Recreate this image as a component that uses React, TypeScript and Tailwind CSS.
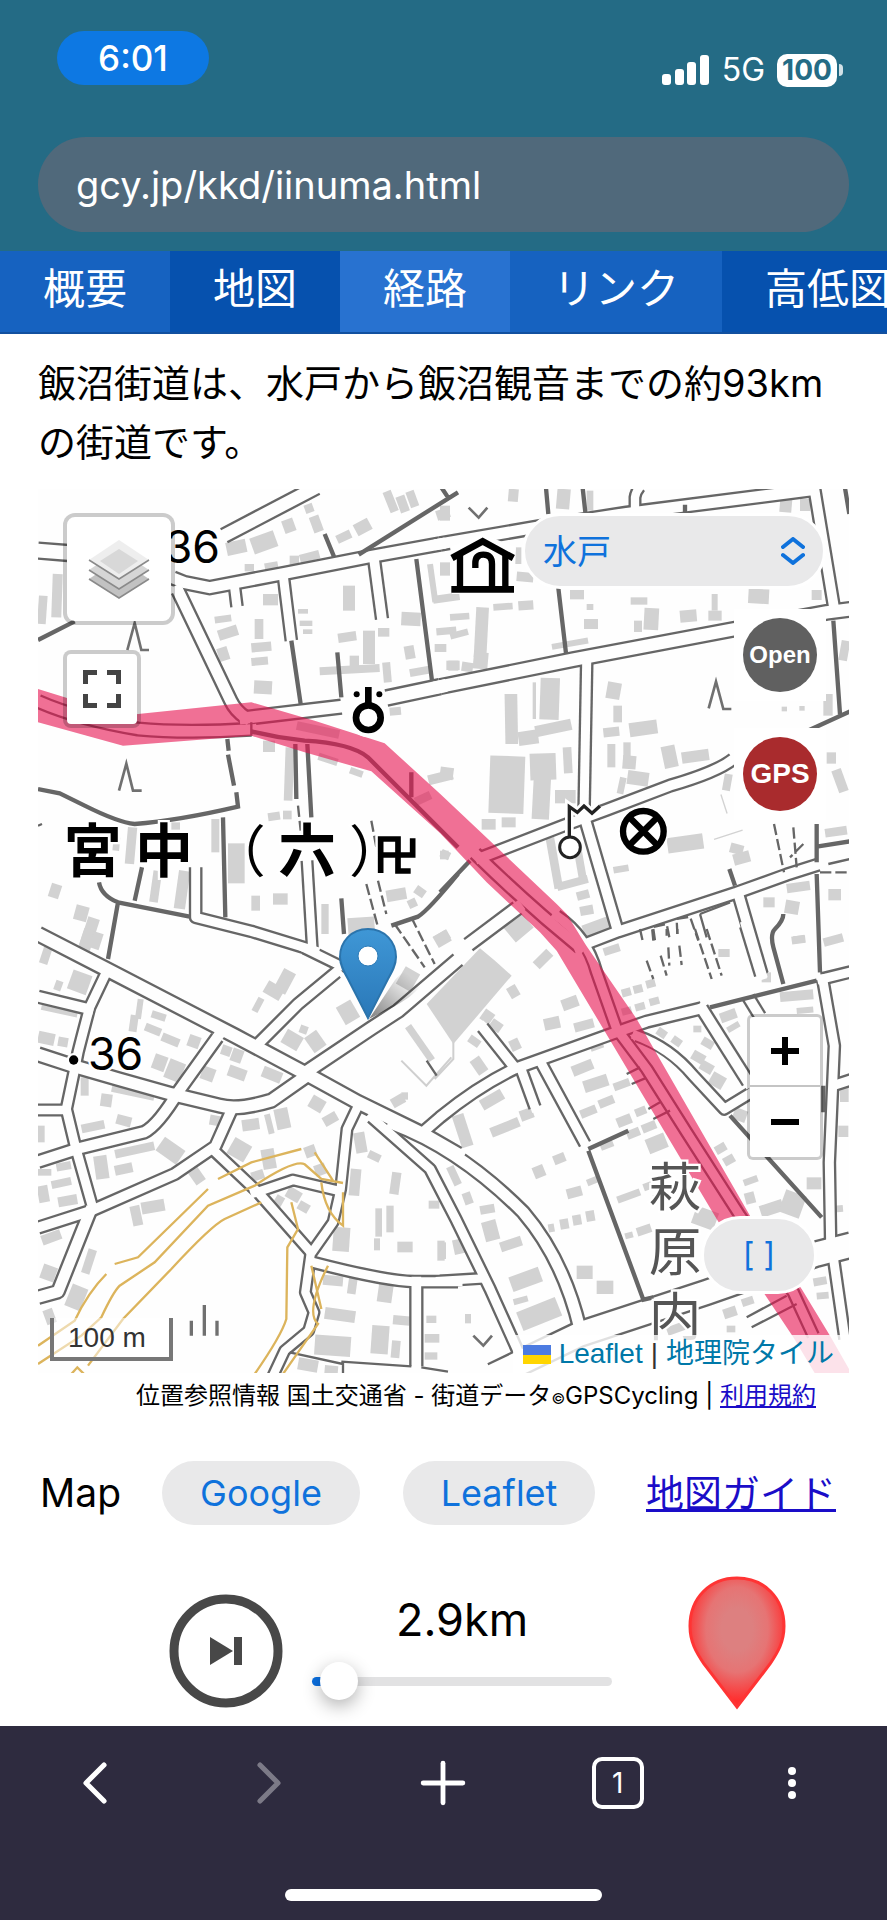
import { ChevronLeft, ChevronRight, Plus } from 'lucide-react'

type Road = [d: string, width: number]
type Building = [x: number, y: number, w: number, h: number, angle: number]

interface Tile {
  id: string
  x: number
  y: number
  roads: Road[]
  thin: string
  dashed: string
  thick: string
  contours: string
  buildings: Building[]
}

const tiles: Tile[] = [
  {
    id: 'nw',
    x: 0,
    y: -15,
    roads: [
      ['M558 155L835 10', 46],
      ['M0 200L90 207', 50],
      ['M405 282L440 296L515 311L740 268L1000 217L1206 180', 42],
      ['M420 320L578 650Q592 680 622 700', 42],
      ['M590 312L597 368', 36],
      ['M737 285L760 470', 36],
      ['M1008 225L1032 405', 38],
      ['M622 702L910 668', 44],
      ['M1045 642L1206 608', 48],
      ['M0 652Q120 705 300 735Q440 748 640 736', 40],
      ['M473 1150V1300L640 1342L830 1400', 36],
      ['M807 1130L823 1395', 34],
    ],
    thin: 'M640 715V755M0 1025L12 1020',
    dashed: 'M985 1200L1020 1330M1020 1190L1045 1290M1000 1010L1015 1090M780 965L788 1040M1070 1320L1160 1450M1120 1300L1190 1440',
    thick:
      'M860 150L888 218M962 212L1260 25M1210 10L1230 40M1135 225L1182 590M760 470L788 660M898 505L910 640M0 468L110 412M0 915L65 928L140 965Q240 1015 290 1020Q420 1010 600 968L595 925M568 765L572 800M570 812L588 905M555 1000L562 1300M772 780L775 945M808 780L820 1000M183 1195Q190 1235 240 1255L455 1298M312 1150L290 1250M240 1255L210 1425M910 1243L918 1350M1260 1170Q1170 1280 1140 1298L1060 1325M1120 865V940M640 742Q720 762 800 770Q940 778 990 820L1260 1090',
    contours: '',
    buildings: [
      [0, 335, 26, 85, 4], [42, 270, 30, 130, 2], [565, 170, 60, 40, -12], [640, 150, 75, 50, -20], [735, 105, 35, 40, -20],
      [820, 95, 30, 50, -20], [800, 60, 26, 26, -20], [755, 215, 28, 28, 0], [785, 205, 60, 26, -15], [895, 145, 45, 26, -25],
      [950, 110, 48, 38, -28], [1045, 20, 26, 65, -22], [1080, 35, 28, 50, -20], [1110, 20, 26, 50, -20], [1195, 75, 40, 30, -18],
      [620, 240, 28, 22, 0], [680, 235, 40, 22, -10], [675, 330, 45, 34, 0], [530, 395, 50, 20, -8], [540, 430, 60, 32, -18],
      [540, 490, 32, 40, -18], [650, 405, 26, 60, 0], [640, 475, 60, 28, -5], [640, 520, 50, 24, -5], [648, 590, 54, 40, 3],
      [780, 375, 30, 14, 0], [785, 410, 38, 16, 0], [795, 436, 28, 14, 0], [915, 305, 36, 75, 0], [900, 445, 55, 28, -8],
      [975, 440, 36, 100, 0], [1020, 432, 34, 26, 0], [845, 545, 180, 24, -3], [935, 515, 28, 50, 0], [1035, 535, 24, 60, -5],
      [1090, 385, 58, 40, 3], [1100, 485, 30, 40, -10], [1115, 550, 60, 24, -10], [1195, 430, 60, 22, -5], [1190, 480, 35, 24, 0],
      [1225, 530, 40, 28, 0], [1175, 240, 18, 115, -8], [1185, 330, 80, 24, -8], [1055, 670, 34, 24, -5], [675, 770, 36, 34, 0],
      [740, 790, 26, 160, 2], [775, 725, 130, 26, 12], [840, 815, 60, 22, 18], [935, 855, 40, 20, 20], [1170, 865, 75, 30, -14],
      [1130, 930, 50, 26, -25], [690, 985, 36, 24, -8], [735, 980, 26, 26, 0], [520, 1005, 24, 100, 0], [570, 1078, 50, 120, 0],
      [265, 1030, 28, 110, 5], [340, 1160, 26, 95, 8], [415, 1160, 34, 115, 8], [35, 1200, 32, 42, 18], [110, 1265, 40, 45, 15],
      [135, 1300, 36, 100, 18], [640, 1235, 26, 45, 0], [705, 1228, 44, 34, 0], [850, 1260, 22, 90, 0], [930, 1300, 80, 60, -4],
      [1045, 1215, 60, 35, -10], [1110, 1245, 26, 26, -25], [1130, 1210, 32, 26, 35], [1190, 1345, 45, 30, -30], [1208, 1100, 28, 24, 25],
      [225, 1060, 20, 40, 5], [400, 1015, 26, 22, 0],
    ],
  },
  {
    id: 'ne',
    x: 1206,
    y: -15,
    roads: [
      ['M0 180L300 128L560 88L1110 18', 42],
      ['M585 70V40Q588 22 600 8', 34],
      ['M1122 8L1182 370', 38],
      ['M0 608L400 527L870 438L1160 385L1230 376', 46],
      ['M440 540L432 990', 36],
      ['M120 1122L370 1025L500 977L690 905Q830 865 880 825', 38],
      ['M435 1005L533 1340', 38],
      ['M415 1388L535 1342L890 1226L1040 1172L1135 1142', 38],
      ['M895 1230L965 1470', 38],
      ['M232 1272L85 1382', 44],
      ['M105 1108Q260 1260 420 1390', 40],
    ],
    thin: 'M1165 1140L1230 1125M780 1290L870 1255M780 1290L800 1360',
    dashed: 'M1002 1020L1032 1165M1060 1030L1070 1150M1090 1080L1050 1120M640 1370L636 1330L680 1320L690 1370M712 1350L710 1305L750 1298L775 1370M1140 1165H1225',
    thick:
      'M318 12L325 90M428 12L436 85M735 62V85M1215 12L1228 90M355 312L378 508M1180 410L1200 690M1108 738L1230 682M1130 1020V1135M1130 1088L1230 1072M1130 1170L1140 1465M1030 1290Q1030 1310 1005 1335Q990 1350 1000 1390L1030 1500M868 1155L885 1205M0 1225L90 1130',
    contours: '',
    buildings: [
      [205, 15, 30, 38, 5], [350, 15, 40, 60, 5], [0, 65, 30, 45, 0], [440, 20, 20, 60, 0], [1020, 30, 36, 55, 5],
      [1080, 45, 30, 36, 0], [760, 60, 30, 20, 0], [0, 235, 30, 40, 0], [230, 265, 50, 28, 5], [210, 190, 34, 50, 0],
      [30, 388, 58, 20, -4], [105, 370, 38, 150, 3], [160, 358, 58, 20, -4], [235, 350, 45, 28, -4], [30, 440, 55, 20, -15],
      [25, 530, 30, 30, 0], [65, 535, 34, 28, 8], [100, 505, 44, 50, 5], [390, 318, 42, 28, 0], [440, 360, 20, 18, 0],
      [335, 470, 110, 18, -10], [432, 405, 42, 30, 0], [572, 340, 50, 22, 0], [612, 372, 44, 66, 3], [582, 410, 24, 34, 0],
      [720, 378, 50, 36, -5], [805, 380, 40, 30, 0], [815, 330, 18, 50, 0], [925, 315, 62, 44, 3], [1115, 318, 30, 30, 0],
      [195, 630, 38, 150, -1], [235, 740, 60, 42, -8], [285, 715, 110, 34, -12], [300, 582, 58, 125, 2], [278, 595, 10, 110, 0],
      [148, 816, 105, 172, 2], [270, 808, 78, 80, -2], [278, 880, 52, 126, 3], [370, 790, 26, 78, -3], [345, 918, 62, 40, 0],
      [125, 1005, 42, 32, 0], [185, 1000, 42, 30, 0], [500, 595, 42, 50, 10], [520, 665, 26, 50, 0], [490, 730, 48, 28, -6],
      [568, 712, 84, 42, -8], [502, 780, 24, 70, 0], [550, 775, 22, 50, 0], [548, 815, 40, 40, 5], [562, 862, 64, 42, 8],
      [668, 785, 42, 66, -12], [725, 800, 82, 34, -8], [535, 880, 20, 50, 12], [850, 870, 24, 50, 10], [1185, 855, 30, 70, -20],
      [1160, 805, 28, 34, 0], [1200, 470, 26, 60, 10], [1150, 630, 28, 65, 0], [1025, 668, 16, 14, 0], [1078, 666, 16, 14, 0],
      [682, 1055, 108, 46, -8], [870, 1080, 40, 30, 15], [880, 1105, 50, 34, -15], [820, 1050, 90, 4, -18], [850, 930, 4, 60, -18],
      [330, 1060, 26, 155, -10], [350, 1185, 95, 24, -15], [410, 1100, 24, 95, -10], [410, 1220, 38, 26, -15], [420, 1265, 40, 28, -10],
      [970, 1240, 34, 30, 0], [1040, 1195, 70, 28, -8], [1035, 1250, 42, 40, 10], [1165, 1215, 38, 34, 0], [1155, 1030, 66, 26, -8],
      [430, 1310, 80, 48, -20], [0, 850, 40, 36, 8], [0, 1100, 26, 26, 0], [200, 1300, 70, 60, -40], [1060, 1355, 36, 22, -5],
      [520, 1145, 46, 20, -10], [250, 1250, 36, 20, 40],
    ],
  },
  {
    id: 'sw',
    x: 0,
    y: 1320,
    roads: [
      ['M0 15L200 118L590 320L800 432L960 520L1160 618L1260 676', 46],
      ['M800 432L1000 298L1080 246L1260 92', 44],
      ['M800 445L700 515Q600 545 545 530L400 495L240 450L110 412L0 376', 44],
      ['M538 325L425 482Q360 590 318 610L130 656L0 698', 40],
      ['M582 540L532 652L410 735L160 845L0 896', 38],
      ['M205 130L155 235Q130 330 120 370L108 430L85 540L112 652L165 840', 36],
      ['M0 203L152 240', 38],
      ['M0 543H85', 34],
      ['M155 850L60 1088L0 1105', 42],
      ['M528 665L660 790L815 966', 36],
      ['M650 792L765 753L900 785', 34],
      ['M958 535L927 600L908 780L885 880L818 975L802 1090L828 1150L812 1205L740 1265L705 1340', 34],
      ['M825 1000Q1040 1056 1130 1058H1260', 36],
      ['M1135 1058V1312', 38],
      ['M665 340L780 225L895 130', 38],
      ['M800 58L910 112L960 100', 34],
    ],
    thin: 'M910 1298L1120 1312M1150 1315L1230 1328M755 1270L915 1305V1335',
    dashed: '',
    thick: '',
    contours:
      'M0 1250L110 1175Q150 1090 205 1035M230 1005L300 985L510 780M540 750L640 700L790 660M830 670L885 755M0 1305L130 1220L190 1165Q225 1090 245 1070L350 1000L510 830L650 770Q770 690 800 706L850 750L915 762M150 1310L255 1170L400 1020Q520 890 560 870L670 820M650 1335Q730 1220 745 1170L748 955L780 900L760 820M850 760Q860 850 915 890V790M870 1010Q800 1150 840 1185L780 1270L735 1335M820 1010L850 1140M100 1335L118 1315L138 1335',
    buildings: [
      [130, 0, 30, 55, 18], [160, 10, 30, 50, 18], [10, 55, 26, 50, 18], [95, 130, 60, 60, 20], [50, 155, 22, 30, 20],
      [10, 228, 110, 26, 12], [0, 310, 50, 36, 12], [60, 325, 30, 28, 10], [295, 210, 18, 60, 8], [275, 258, 24, 50, 8],
      [340, 250, 44, 22, 18], [320, 290, 50, 24, 22], [370, 320, 55, 26, 22], [345, 378, 40, 46, 20], [385, 395, 50, 60, 22],
      [450, 320, 36, 36, 20], [720, 122, 40, 70, 28], [680, 165, 55, 40, 30], [650, 205, 20, 45, 28], [550, 350, 30, 30, 20],
      [580, 360, 34, 40, 20], [490, 415, 40, 40, 20], [570, 415, 55, 34, 20], [672, 420, 60, 34, 22], [735, 310, 55, 46, 30],
      [810, 310, 44, 55, -35], [905, 220, 50, 60, -30], [785, 290, 24, 24, 20], [128, 445, 24, 55, 0], [188, 495, 34, 38, 8],
      [220, 480, 130, 22, 12], [130, 580, 70, 26, -12], [235, 560, 45, 30, 15], [230, 650, 120, 26, -12], [170, 680, 40, 70, -8],
      [230, 705, 54, 30, -12], [360, 640, 75, 50, 35], [0, 720, 40, 20, 0], [55, 700, 44, 24, -10], [40, 750, 60, 24, -12],
      [0, 770, 32, 50, -10], [60, 800, 58, 30, -10], [280, 830, 30, 60, -12], [310, 815, 70, 36, -10], [460, 720, 34, 44, -35],
      [515, 560, 40, 30, 10], [612, 570, 52, 34, -8], [685, 555, 18, 60, -14], [712, 538, 42, 62, -12], [575, 635, 58, 55, 30],
      [672, 660, 40, 60, -10], [800, 650, 34, 34, -20], [830, 705, 34, 34, -20], [640, 725, 38, 28, -18], [815, 505, 44, 40, 30],
      [855, 555, 44, 30, -30], [0, 590, 20, 50, 0], [745, 780, 44, 34, 30], [780, 820, 34, 28, 30], [710, 800, 26, 30, 30],
      [1060, 500, 40, 30, -30], [1090, 490, 20, 22, 0], [1135, 280, 22, 125, -35], [1085, 120, 50, 60, 30], [1190, 10, 45, 38, -30],
      [950, 610, 34, 62, -10], [990, 670, 38, 24, 25], [935, 720, 32, 80, 5], [1058, 730, 28, 66, 8], [1172, 815, 32, 24, 0],
      [1012, 838, 20, 85, 0], [1045, 830, 22, 80, 0], [1008, 928, 18, 36, 0], [1078, 938, 46, 32, 0], [1198, 935, 22, 60, 0],
      [885, 895, 50, 72, 4], [10, 1010, 44, 44, 20], [140, 960, 26, 75, 18], [90, 1070, 50, 70, 22], [20, 1140, 30, 45, -20],
      [10, 910, 60, 30, -20], [855, 1040, 60, 30, 5], [930, 1045, 26, 50, 8], [1020, 1060, 44, 60, 8], [860, 1140, 92, 36, 8],
      [830, 1220, 108, 60, 4], [1000, 1190, 52, 85, 4], [1065, 1160, 50, 28, 5], [1060, 1235, 26, 52, 5], [1165, 1160, 30, 22, 0],
      [1160, 1215, 44, 26, 0], [1160, 1270, 38, 22, 0], [780, 1290, 60, 36, 10], [860, 1310, 40, 24, 5],
    ],
  },
  {
    id: 'se',
    x: 1206,
    y: 1320,
    roads: [
      ['M-46 605L0 565Q110 475 222 420L520 313L620 278L785 238', 38],
      ['M785 238L925 460', 40],
      ['M590 320Q690 355 760 440L853 540L935 490', 36],
      ['M305 405L435 645', 36],
      ['M245 425L285 535', 36],
      ['M128 295L218 408', 38],
      ['M-205 565Q-120 640 -30 720L50 875L150 1080L240 1280', 36],
      ['M-140 585Q60 660 250 850Q370 990 420 1200', 42],
      ['M0 1056L130 1048', 34],
      ['M350 -40Q440 20 470 130L530 300L620 420L740 610L900 860L1060 1090L1120 1220', 36],
      ['M1145 150L1235 128', 36],
      ['M1148 150L1183 350L1168 700L1172 940', 36],
      ['M1185 468L1235 452', 36],
      ['M160 1340L420 1215L800 1090L1130 975L1235 948', 78],
      ['M1180 985L1215 1230', 36],
      ['M918 -10L963 138', 38],
      ['M925 205L960 262', 38],
    ],
    thin: 'M920 1165L1040 1100M935 1195L1070 1125M560 435L600 415M575 465L615 448M625 540L660 520M640 570L690 545M-40 395L-10 440',
    dashed: 'M600 0L610 45M640 0L645 35M620 95L640 150M662 80L680 140M685 55L688 110M718 50L725 108M765 0L815 150M800 0L845 140M680 0V20M712 0V15',
    thick: 'M810 235L1130 155M870 560L1145 865M445 660L565 605M445 665L610 1112L640 1105M1150 470V550',
    contours: '',
    buildings: [
      [280, 75, 58, 30, -45], [365, 205, 50, 34, -20], [312, 265, 48, 36, -12], [402, 275, 60, 28, -15], [545, 178, 28, 24, -15],
      [580, 168, 28, 24, -15], [618, 152, 28, 24, -15], [545, 235, 30, 22, -15], [585, 222, 30, 22, -15], [628, 206, 30, 22, -15],
      [205, 170, 30, 36, -30], [125, 245, 34, 36, 35], [150, 275, 36, 30, 35], [210, 330, 30, 34, -25], [85, 325, 36, 24, 35],
      [100, 385, 34, 50, -35], [120, 495, 72, 34, -30], [50, 555, 36, 100, -18], [150, 580, 90, 30, -22], [240, 540, 40, 32, -20],
      [395, 400, 65, 32, -22], [430, 445, 75, 36, -18], [450, 340, 40, 22, -20], [520, 455, 50, 24, -20], [420, 535, 50, 26, -22],
      [475, 505, 48, 26, -22], [530, 560, 45, 30, -22], [585, 535, 34, 24, -22], [560, 600, 40, 26, -22], [605, 580, 44, 26, -22],
      [620, 620, 60, 46, -22], [480, 635, 40, 24, -22], [340, 675, 36, 28, -22], [280, 710, 34, 36, -22], [380, 775, 46, 30, -15],
      [440, 745, 40, 20, -22], [530, 790, 72, 22, -20], [610, 760, 30, 22, -20], [325, 885, 18, 24, -10], [360, 870, 26, 30, -10],
      [398, 858, 26, 30, -10], [438, 845, 26, 32, -10], [120, 828, 44, 26, -10], [130, 875, 44, 60, -15], [180, 930, 66, 30, -18],
      [40, 930, 40, 44, -12], [0, 940, 18, 50, 0], [210, 1028, 94, 46, -20], [235, 1125, 125, 60, -22], [220, 1105, 44, 18, -15],
      [410, 1010, 48, 40, 0], [470, 1055, 50, 40, 0], [590, 890, 44, 26, -18], [555, 910, 24, 18, -15], [75, 1155, 18, 28, 0],
      [760, 840, 70, 55, 20], [825, 645, 34, 26, -30], [850, 680, 34, 26, -30], [910, 745, 44, 20, -20], [915, 790, 30, 34, -15],
      [960, 820, 70, 36, -18], [1025, 790, 65, 70, 20], [1100, 745, 44, 36, 0], [1165, 830, 44, 20, -5], [650, 300, 30, 24, 35],
      [695, 325, 30, 24, 35], [785, 330, 36, 26, 30], [755, 370, 40, 30, 30], [780, 400, 40, 30, 30], [810, 435, 44, 40, 30],
      [840, 245, 50, 30, -20], [860, 285, 40, 18, -30], [1020, 185, 100, 30, -5], [1070, 235, 50, 18, -5], [1055, 20, 40, 24, -8],
      [1150, 20, 60, 26, -15], [965, 130, 28, 30, 0], [835, 60, 34, 24, 0], [490, 50, 50, 24, -18], [1200, 475, 26, 44, 0],
      [1195, 590, 30, 34, 0], [850, 1135, 40, 30, -18], [905, 1105, 36, 24, -18], [860, 1190, 26, 20, 0], [1120, 1045, 40, 24, -10],
      [1130, 1090, 36, 20, -5], [680, 1185, 60, 26, -20], [640, 790, 50, 22, -20], [880, 540, 40, 36, 20], [760, 290, 24, 20, 0],
      [30, 710, 24, 60, -25], [70, 790, 26, 36, -20],
    ],
  },
]

const cities = ['水戸', '石岡', '土浦', '飯沼']

function RoadMap() {
  return (
    <svg
      viewBox="0 0 2433 2652"
      preserveAspectRatio="xMidYMid slice"
      className="absolute inset-0 h-full w-full bg-[#fefefe]"
      fill="none"
      role="img"
      aria-label="水戸周辺の地図"
    >
      <g fill="#d2d2d2">
        {tiles.map((t) => (
          <g key={t.id} transform={`translate(${t.x} ${t.y})`}>
            {t.buildings.map(([x, y, w, h, a], i) => (
              <rect key={i} x={x} y={y} width={w} height={h} transform={`rotate(${a} ${x + w / 2} ${y + h / 2})`} />
            ))}
          </g>
        ))}
        <path d="M1326 1378L1371 1415L1421 1460L1246 1665L1166 1545Z" />
      </g>
      <path d="M1090 1715L1165 1790L1240 1705M1246 1660V1710L1190 1770" stroke="#cfcfcf" strokeWidth="6" />

      <g stroke="#666" strokeLinejoin="round">
        {tiles.map((t) => (
          <g key={t.id} transform={`translate(${t.x} ${t.y})`}>
            {t.roads.map(([d, w], i) => (
              <path key={i} d={d} strokeWidth={w + 5} />
            ))}
          </g>
        ))}
      </g>
      <g stroke="#fefefe" strokeLinejoin="round" strokeLinecap="square">
        {tiles.map((t) => (
          <g key={t.id} transform={`translate(${t.x} ${t.y})`}>
            {t.roads.map(([d, w], i) => (
              <path key={i} d={d} strokeWidth={w - 9} />
            ))}
          </g>
        ))}
      </g>
      {tiles.map((t) => (
        <g key={t.id} transform={`translate(${t.x} ${t.y})`}>
          <path d={t.thin} stroke="#666" strokeWidth="7" />
          <path d={t.dashed} stroke="#666" strokeWidth="7" strokeDasharray="34 12" />
          <path d={t.thick} stroke="#666" strokeWidth="13" />
          <path d={t.contours} stroke="#dcb45c" strokeWidth="7" />
        </g>
      ))}

      {/* vegetation marks */}
      <g stroke="#707070" strokeWidth="8">
        <path d="M268 483L290 402L310 483H333" />
        <path d="M243 905L265 824L285 905H311" />
        <path d="M2012 658L2034 578L2056 660H2080" />
        <path d="M1292 56L1322 86L1348 56" />
        <path d="M1306 2540L1336 2570L1362 2540" />
        <path d="M460 2495V2540M499 2448V2540M537 2495V2540" strokeWidth="10" />
      </g>

      {/* highlighted old road */}
      <path
        d="M0 600L80 625L250 680L640 640L830 695L1040 763L1206 914L1556 1245L1586 1275L1645 1370L1796 1590L2136 2180L2291 2400L2376 2540L2433 2640V2652H2330L2266 2545L2176 2410L2036 2190L1556 1385L1506 1330L1346 1180L1206 1032L1000 847L800 790L640 740L255 770L0 700Z"
        fill="#e6114f"
        fillOpacity="0.6"
      />

      {/* place names and spot heights */}
      <g
        fill="#000"
        stroke="#fff"
        strokeWidth="14"
        paintOrder="stroke"
        className="[font-family:'Noto_Sans_CJK_JP',sans-serif]"
      >
        <g className="[font-family:Inter,sans-serif]" fontSize="134">
          <text x="380" y="222">36</text>
          <text x="150" y="1744">36</text>
        </g>
        <circle cx="107" cy="1713" r="14" />
        <g fontSize="174" fontWeight="700">
          <text x="77" y="1150">宮</text>
          <text x="291" y="1150">中</text>
          <text x="721" y="1150">六</text>
        </g>
        <g fontSize="168">
          <text x="515" y="1148">（</text>
          <text x="933" y="1148">）</text>
        </g>
        <g fontSize="158" fill="#555">
          <text x="1832" y="2152">萩</text>
          <text x="1832" y="2346">原</text>
          <text x="1832" y="2540">内</text>
        </g>
      </g>

      {/* temple */}
      <path d="M1028 1042V1100M1028 1050H1080M1080 1042V1146H1118M1028 1152V1098H1124V1048" stroke="#fff" strokeWidth="32" />
      <path d="M1028 1042V1100M1028 1050H1080M1080 1042V1146H1118M1028 1152V1098H1124V1048" stroke="#000" strokeWidth="17" />

      {/* ward office */}
      <circle cx="991" cy="686" r="37" stroke="#fff" strokeWidth="44" />
      <circle cx="991" cy="686" r="37" fill="#fff" stroke="#000" strokeWidth="20" />
      <path d="M991 594V655" stroke="#000" strokeWidth="20" />
      <circle cx="956" cy="616" r="9" fill="#000" />
      <circle cx="1024" cy="616" r="9" fill="#000" />

      {/* museum */}
      <g transform="translate(1206 -15)">
        <path d="M30 190L128 150L228 190L222 330H36V225Z" fill="#fff" />
        <path d="M36 222L128 172L220 222" stroke="#000" strokeWidth="20" />
        <path d="M60 210V310M196 210V310M106 252V238Q106 212 130 212Q156 212 156 240V310" stroke="#000" strokeWidth="19" />
        <path d="M34 316H222" stroke="#000" strokeWidth="20" />
      </g>

      {/* observatory */}
      <g transform="translate(1206 -15)">
        <path d="M388 1060V968L412 985L432 966L456 988L480 966" stroke="#fff" strokeWidth="26" />
        <path d="M388 1060V968L412 985L432 966L456 988L480 966" stroke="#222" strokeWidth="10" />
        <circle cx="390" cy="1090" r="31" fill="#fff" stroke="#222" strokeWidth="9" />
      </g>

      {/* police station */}
      <g transform="translate(1206 -15)">
        <circle cx="610" cy="1042" r="76" fill="#fff" />
        <circle cx="610" cy="1042" r="61" stroke="#000" strokeWidth="19" />
        <path d="M568 1000L652 1084M652 1000L568 1084" stroke="#000" strokeWidth="19" />
      </g>
    </svg>
  )
}

function Marker() {
  return (
    <svg viewBox="0 0 100 96" className="absolute top-[437px] left-[299px] h-24 w-[100px]" aria-hidden="true">
      <defs>
        <linearGradient id="pin" x1="0" y1="0" x2="0" y2="1">
          <stop offset="0" stopColor="#3f97d6" />
          <stop offset="1" stopColor="#2a78b8" />
        </linearGradient>
        <linearGradient id="shade" x1="0" y1="1" x2="1" y2="0">
          <stop offset="0" stopColor="#000" stopOpacity="0.5" />
          <stop offset="0.8" stopColor="#000" stopOpacity="0" />
        </linearGradient>
      </defs>
      <path d="M32 93C48 84 74 76 86 56C94 40 70 38 58 54Z" fill="url(#shade)" />
      <path
        d="M31 3C14 3 3 16 3 31C3 39 7 46 11 53L31 92L51 53C55 46 59 39 59 31C59 16 48 3 31 3Z"
        fill="url(#pin)"
        stroke="#2b74ac"
        strokeWidth="2"
      />
      <circle cx="31" cy="30" r="10" fill="#fff" stroke="#2e7cb8" strokeWidth="1" />
    </svg>
  )
}

function LayersIcon() {
  return (
    <svg viewBox="0 0 62 60" className="h-[60px] w-[62px]" aria-hidden="true">
      <path d="M31 20L61 40L31 59L1 40Z" fill="#c2c2c2" />
      <path d="M1 40L31 59L61 40" fill="none" stroke="#8a8a8a" strokeWidth="1.500" />
      <path d="M31 11L61 31L31 50L1 31Z" fill="#d6d6d6" />
      <path d="M1 31L31 50L61 31" fill="none" stroke="#8a8a8a" strokeWidth="1.500" />
      <path d="M31 1L61 21L31 40L1 21Z" fill="#eee" />
      <path d="M31 10L50 22L31 35L12 22Z" fill="#d8d8d8" />
      <path d="M1 21L31 40L61 21" fill="none" stroke="#8a8a8a" strokeWidth="1.500" />
    </svg>
  )
}

function StatusBar() {
  return (
    <div className="flex items-start justify-between pt-[31px] pr-[44px] pl-[57px]">
      <div className="flex h-[54px] w-[152px] items-center justify-center rounded-full bg-[#0d78e3] text-[35px] font-medium text-white">
        6:01
      </div>
      <div className="mt-[21px] flex items-center gap-3 text-white">
        <svg viewBox="0 0 48 32" className="h-8 w-12" fill="currentColor" aria-hidden="true">
          <rect x="0" y="20" width="9" height="11" rx="3" />
          <rect x="13" y="15" width="9" height="16" rx="3" />
          <rect x="25" y="8" width="9" height="23" rx="3" />
          <rect x="38" y="1" width="9" height="30" rx="3" />
        </svg>
        <span className="text-[32px] leading-9">5G</span>
        <div className="flex items-center gap-[2px]">
          <span className="flex h-[33px] w-[60px] items-center justify-center rounded-[10px] bg-white text-[28px] font-bold text-[#246b85]">
            100
          </span>
          <span className="h-3 w-1 rounded-r-full bg-white/80" />
        </div>
      </div>
    </div>
  )
}

function MapPanel() {
  return (
    <section className="relative h-[884px] w-full overflow-hidden">
      <RoadMap />
      <Marker />

      <button
        aria-label="Layers"
        className="absolute top-6 left-[25px] flex size-28 items-center justify-center rounded-xl border-4 border-black/20 bg-white bg-clip-padding"
      >
        <LayersIcon />
      </button>
      <button
        aria-label="Full screen"
        className="absolute top-[161px] left-[25px] flex size-[78px] items-center justify-center rounded-lg border-4 border-black/20 bg-white bg-clip-padding"
      >
        <svg viewBox="0 0 38 38" className="size-[38px]" fill="none" stroke="#444" strokeWidth="5" aria-hidden="true">
          <path d="M2.500 14V2.500H14M24 2.500H35.500V14M35.500 24V35.500H24M14 35.500H2.500V24" />
        </svg>
      </button>

      <div className="absolute top-6 right-[23px] w-[304px]">
        <select
          aria-label="地点"
          className="h-[76px] w-full appearance-none rounded-full border-3 border-white bg-[#e9e9ea] pl-[18px] text-[34px] text-[#0f72dc]"
        >
          {cities.map((city) => (
            <option key={city}>{city}</option>
          ))}
        </select>
        <svg
          viewBox="0 0 24 28"
          className="pointer-events-none absolute top-6 right-[21px] h-7 w-6"
          fill="none"
          stroke="#0f72dc"
          strokeWidth="4"
          strokeLinecap="round"
          strokeLinejoin="round"
          aria-hidden="true"
        >
          <path d="M2 10L12 2L22 10M2 18L12 26L22 18" />
        </svg>
      </div>

      <div className="absolute top-[120px] right-[23px] flex flex-col gap-[27px] [font-family:'Liberation_Sans',sans-serif] font-bold text-white">
        <button className="flex size-[92px] items-center justify-center bg-white">
          <span className="flex size-[74px] items-center justify-center rounded-full bg-[#606060] text-[24px]">Open</span>
        </button>
        <button className="flex size-[92px] items-center justify-center bg-white">
          <span className="flex size-[74px] items-center justify-center rounded-full bg-[#a92b2d] text-[28px]">GPS</span>
        </button>
      </div>

      <div className="absolute right-[26px] bottom-[213px] flex w-[76px] flex-col rounded-md border-3 border-black/20 bg-white bg-clip-padding">
        <button aria-label="Zoom in" className="flex h-[70px] items-center justify-center border-b-2 border-[#c4c4c4]">
          <svg viewBox="0 0 28 28" className="size-7" stroke="#000" strokeWidth="6" aria-hidden="true">
            <path d="M14 0V28M0 14H28" />
          </svg>
        </button>
        <button aria-label="Zoom out" className="flex h-[70px] items-center justify-center">
          <svg viewBox="0 0 28 28" className="size-7" stroke="#000" strokeWidth="6" aria-hidden="true">
            <path d="M0 14H28" />
          </svg>
        </button>
      </div>

      <button className="absolute right-8 bottom-[79px] h-[78px] w-[116px] rounded-full border-3 border-white bg-[#e9e9ea] text-[32px] text-[#0f72dc]">
        [ ]
      </button>

      <div className="absolute bottom-3 left-3 h-[43px] w-[123px] border-4 border-t-0 border-[#777] bg-white/50 pl-[14px] [font-family:'Liberation_Sans',sans-serif] text-[28px] leading-10 text-[#333]">
        100 m
      </div>

      <div className="absolute right-0 bottom-0 flex h-[38px] items-center gap-2 bg-white/80 pr-[15px] pl-[10px] [font-family:'Liberation_Sans','Noto_Sans_CJK_JP',sans-serif] text-[28px] text-[#0078a8]">
        <svg viewBox="0 0 28 19" className="h-[19px] w-7" aria-hidden="true">
          <path d="M0 0H28V10H0Z" fill="#4c7be1" />
          <path d="M0 10H28V19H0Z" fill="#ffd500" />
        </svg>
        <a href="#leaflet">Leaflet</a>
        <span className="text-[#333]">|</span>
        <a href="#tiles">地理院タイル</a>
      </div>
    </section>
  )
}

function RoutePlayer() {
  return (
    <div className="mt-[51px] flex items-start pr-[63px] pl-[131px]">
      <button aria-label="Next point" className="mt-[18px]">
        <svg viewBox="0 0 114 114" className="size-[114px]" aria-hidden="true">
          <circle cx="57" cy="57" r="52" fill="#fff" stroke="#484848" strokeWidth="9" />
          <path d="M41 43L64 57L41 71Z" fill="#484848" />
          <path d="M65 43H73V71H65Z" fill="#484848" />
        </svg>
      </button>
      <div className="ml-[29px] flex w-[300px] flex-col items-center">
        <label htmlFor="distance" className="mt-4 text-[45px] leading-[56px]">
          2.9km
        </label>
        <input
          id="distance"
          type="range"
          min="0"
          max="93"
          step="0.1"
          defaultValue="2.9"
          className="mt-[14px] h-[38px] w-full appearance-none bg-transparent [&::-webkit-slider-runnable-track]:h-[9px] [&::-webkit-slider-runnable-track]:rounded-full [&::-webkit-slider-runnable-track]:bg-[linear-gradient(to_right,#0a6fe0_6%,#e2e2e3_6%)] [&::-webkit-slider-thumb]:-mt-[15px] [&::-webkit-slider-thumb]:size-[38px] [&::-webkit-slider-thumb]:appearance-none [&::-webkit-slider-thumb]:rounded-full [&::-webkit-slider-thumb]:bg-white [&::-webkit-slider-thumb]:shadow-[0_6px_18px_rgba(0,0,0,0.3)]"
        />
      </div>
      <svg viewBox="0 0 98 134" className="ml-auto h-[134px] w-[98px]" aria-hidden="true">
        <defs>
          <radialGradient id="goal" cx="0.5" cy="0.4" r="0.55">
            <stop offset="0.3" stopColor="#dd8080" />
            <stop offset="0.6" stopColor="#e67474" />
            <stop offset="1" stopColor="#ff2f2f" />
          </radialGradient>
        </defs>
        <path
          d="M49 2C22 2 2 22 2 50C2 66 8 76 16 88L49 131L82 88C90 76 96 66 96 50C96 22 76 2 49 2Z"
          fill="url(#goal)"
          stroke="#ff3434"
          strokeWidth="3"
        />
      </svg>
    </div>
  )
}

function BrowserBar() {
  return (
    <footer className="mt-auto bg-[#2e2b3f] text-white">
      <div className="grid h-[114px] grid-cols-5 place-items-center px-2">
        <button aria-label="Back">
          <ChevronLeft className="size-[72px]" strokeWidth={1.7} />
        </button>
        <button aria-label="Forward" className="text-[#7c7a87]">
          <ChevronRight className="size-[72px]" strokeWidth={1.7} />
        </button>
        <button aria-label="New tab">
          <Plus className="size-[68px]" strokeWidth={1.7} />
        </button>
        <button
          aria-label="Tabs"
          className="flex size-[52px] items-center justify-center rounded-[10px] border-4 border-white text-[28px]"
        >
          1
        </button>
        <button aria-label="Menu" className="flex flex-col gap-1 p-2">
          <span className="size-2 rounded-full bg-white" />
          <span className="size-2 rounded-full bg-white" />
          <span className="size-2 rounded-full bg-white" />
        </button>
      </div>
      <div className="flex h-20 items-end justify-center pb-[19px]">
        <span className="h-3 w-[317px] rounded-full bg-white" />
      </div>
    </footer>
  )
}

export default function App() {
  return (
    <div className="flex min-h-screen flex-col overflow-hidden bg-white [font-family:Inter,'Noto_Sans_CJK_JP',sans-serif] text-black">
      <header className="bg-[#246b85] pb-[19px]">
        <StatusBar />
        <div className="mt-[49px] px-[38px]">
          <input
            aria-label="Address"
            defaultValue="gcy.jp/kkd/iinuma.html"
            className="h-[95px] w-full rounded-full bg-[#50697b] px-[38px] text-[38px] text-white"
          />
        </div>
      </header>

      <nav className="flex h-[83px] shrink-0 overflow-hidden border-b-2 border-[#12509f] text-[42px] leading-[76px] whitespace-nowrap text-white">
        <a href="#about" className="shrink-0 bg-[#1662c0] px-[43px]">概要</a>
        <a href="#map" className="shrink-0 bg-[#0651ae] px-[43px]">地図</a>
        <a href="#route" className="shrink-0 bg-[#2872d0] px-[43px]">経路</a>
        <a href="#links" className="shrink-0 bg-[#1662c0] px-[43px]">リンク</a>
        <a href="#elevation" className="shrink-0 bg-[#0651ae] px-[43px]">高低図</a>
      </nav>

      <main className="px-[38px]">
        <p className="mt-5 mb-[17px] text-[38px] leading-[59px]">
          飯沼街道は、水戸から飯沼観音までの約93kmの街道です。
        </p>

        <MapPanel />

        <p className="pt-1 pr-[33px] text-right text-[24px] leading-[38px]">
          位置参照情報 国土交通省 - 街道データ<small className="text-[15px]">©</small>GPSCycling |{' '}
          <a href="#terms" className="text-[#1a0dc8] underline">利用規約</a>
        </p>

        <div className="mt-[43px] flex items-center text-[38px]">
          <span className="w-[124px] pl-[2px] text-[39px]">Map</span>
          <button className="h-16 w-[198px] rounded-full bg-[#e9e9ea] text-[36px] text-[#0f72dc]">Google</button>
          <button className="ml-[43px] h-16 w-48 rounded-full bg-[#e9e9ea] text-[36px] text-[#0f72dc]">Leaflet</button>
          <a href="#guide" className="mr-[13px] ml-auto leading-[60px] text-[#1a0dc8] underline">地図ガイド</a>
        </div>

        <RoutePlayer />
      </main>

      <BrowserBar />
    </div>
  )
}
